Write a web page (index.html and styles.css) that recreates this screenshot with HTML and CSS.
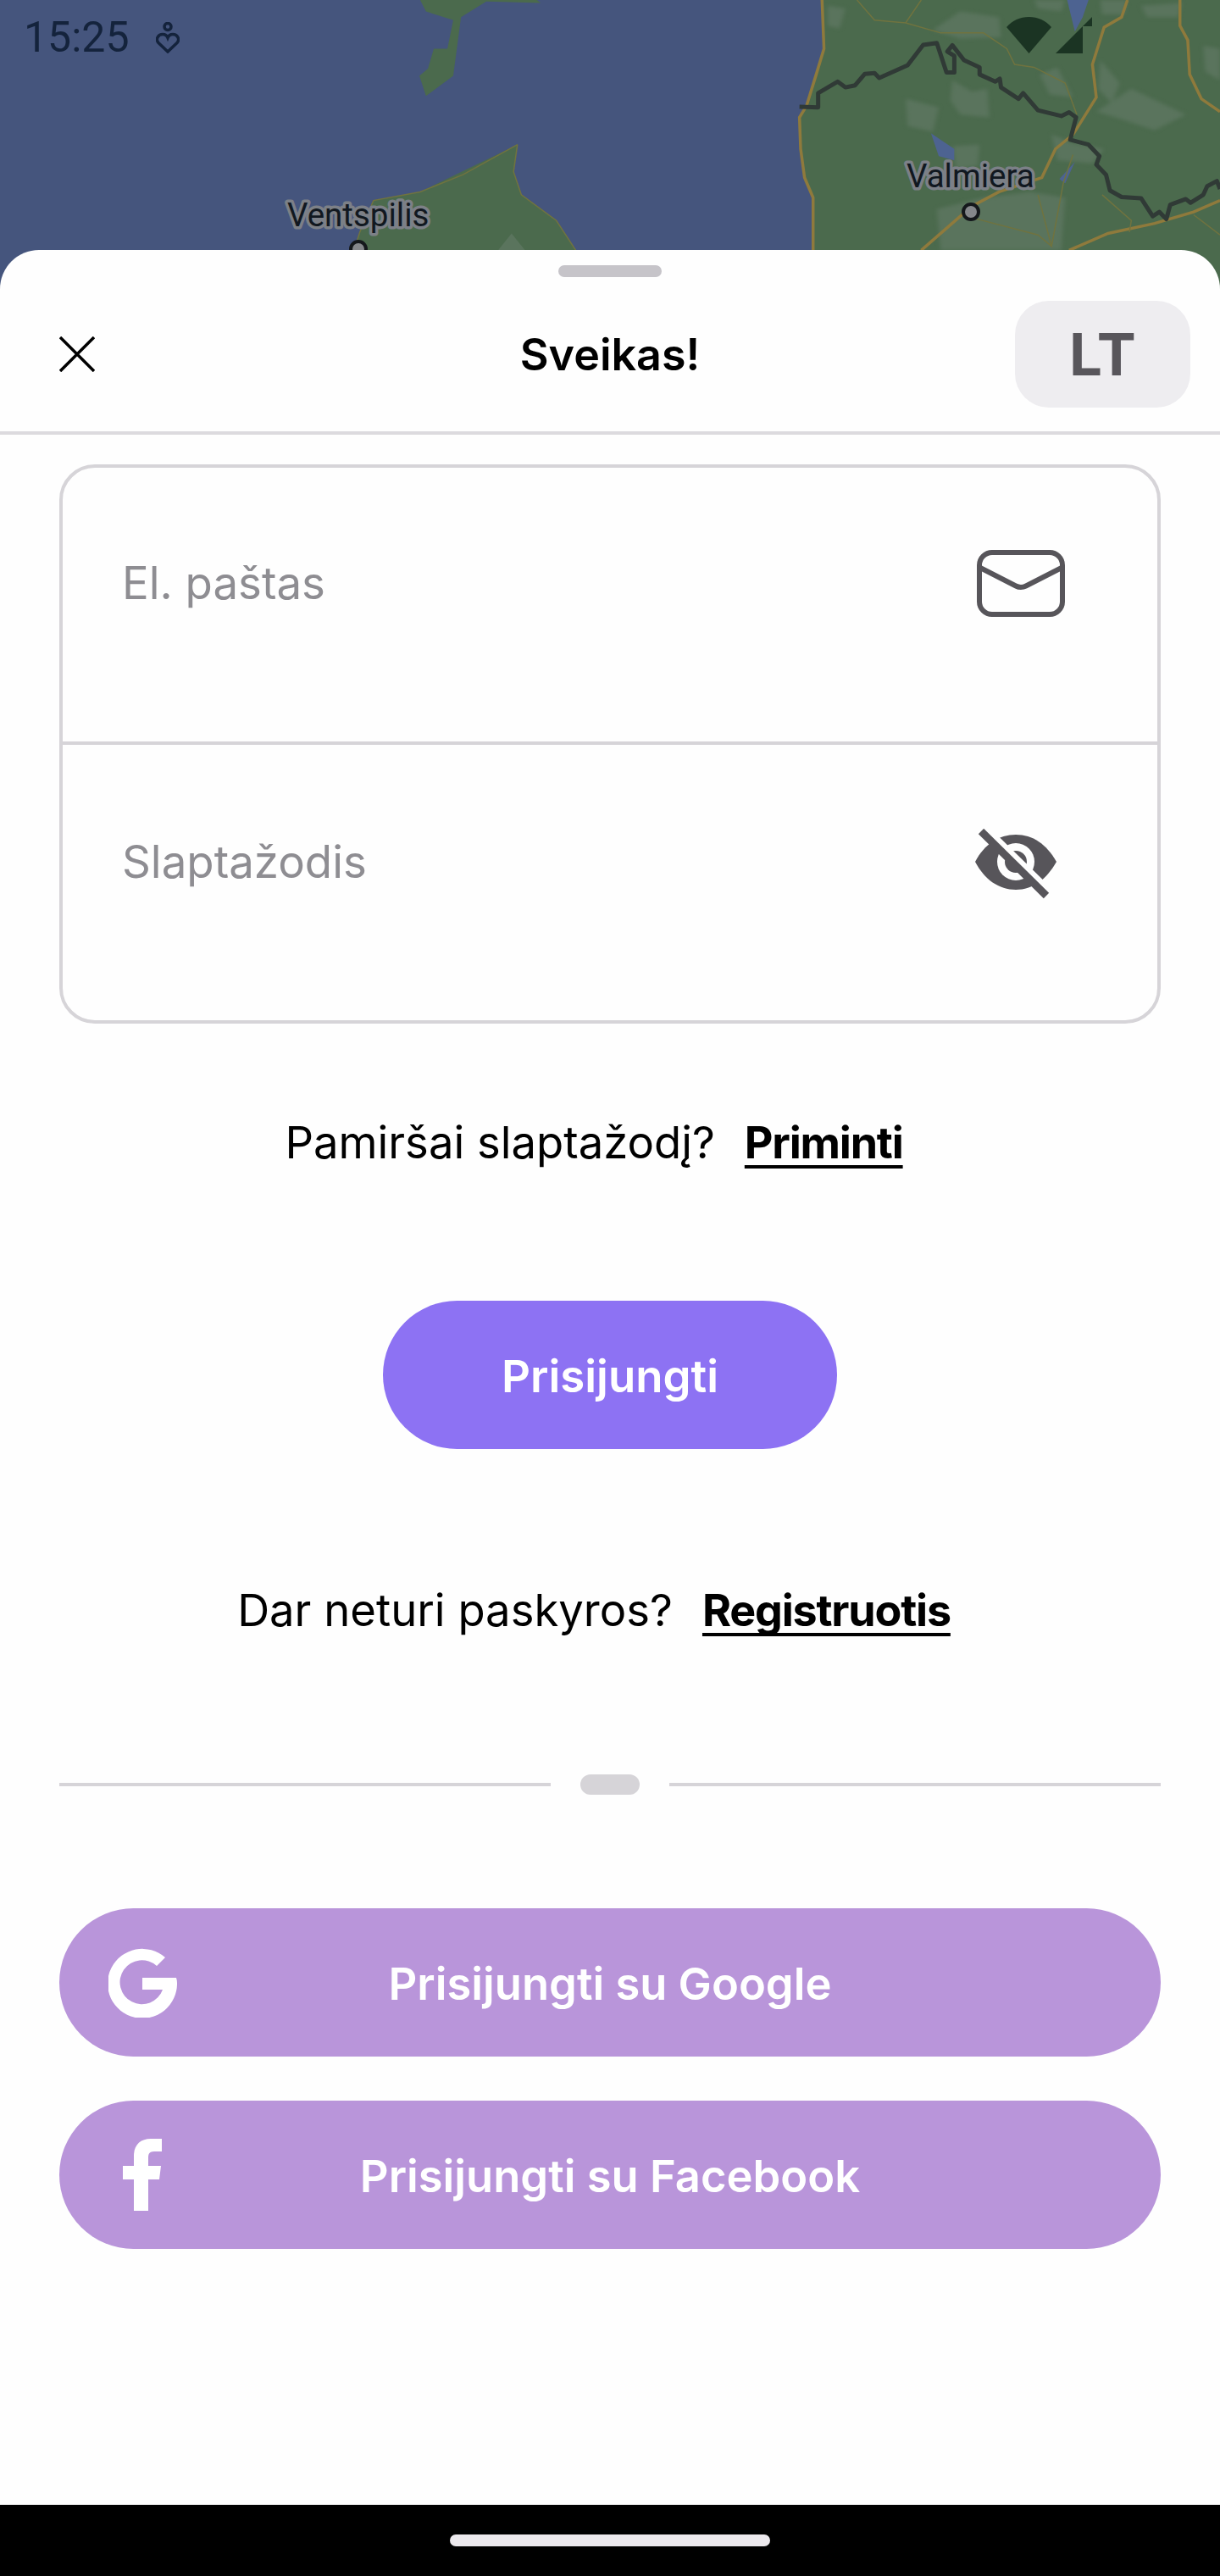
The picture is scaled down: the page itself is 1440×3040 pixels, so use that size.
FILE: index.html
```html
<!DOCTYPE html>
<html lang="lt">
<head>
<meta charset="utf-8">
<title>Sveikas!</title>
<link rel="stylesheet" href="styles.css">
</head>
<body>
<div class="screen">
  <div class="map">
    <svg class="map-svg" width="1440" height="345" viewBox="0 0 1440 345">
      <rect width="1440" height="345" fill="#45557d"/>
      <g transform="scale(.4592 .338)">
        <path class="land" d="M1080 0 1095 40 1165 70 1150 170 1115 170 1100 240 1078 265 1095 335 1165 265 1185 60 1250 5 1390 10 1380 0Z"/>
        <path class="land" d="M1330 505 1320 600 1340 680 1430 770 1480 874 1480 1020 880 1020 910 874 925 810 960 700 1080 670Z"/>
        <path class="road-thin" d="M1330 505 1320 600 1340 680 1430 770 1480 874"/>
        <path class="road-thin" d="M1330 505 1190 610 1080 670 960 700 925 810 910 874"/>
        <path class="urban" d="M1280 874 1315 815 1350 874Z"/>
      </g>
      <g transform="translate(720 0) scale(.4592 .338)">
        <path class="land" d="M545 0 550 170 530 260 505 370 487 410 490 520 500 620 522 690 522 1020 1568 1020 1568 0Z"/>
        <g class="urban-group">
          <path class="urban" d="M560 20 605 30 590 100 560 90Z"/>
          <path class="urban" d="M830 105 900 40 1000 60 1005 130 900 135Z"/>
          <path class="urban" d="M760 345 845 375 830 460 765 440Z"/>
          <path class="urban" d="M880 280 930 320 970 310 975 410 900 400 875 350Z"/>
          <path class="urban" d="M1105 260 1150 235 1190 340 1130 330Z"/>
          <path class="urban" d="M1250 390 1340 310 1480 400 1400 455 1300 410Z"/>
          <path class="urban" d="M1260 210 1310 290 1290 360 1255 310Z"/>
          <path class="urban" d="M1090 0 1170 0 1160 40 1100 30Z"/>
          <path class="urban" d="M1260 0 1330 0 1320 50 1265 50Z"/>
          <path class="urban" d="M1365 20 1470 10 1460 60 1380 60Z"/>
          <path class="urban" d="M1525 160 1568 170 1568 280 1530 250Z"/>
          <path class="urban" d="M880 510 950 505 945 580 890 590Z"/>
          <path class="urban" d="M840 730 960 690 1080 670 1170 690 1160 874 850 874Z"/>
          <path class="urban" d="M1135 470 1190 500 1270 520 1240 570 1150 560Z"/>
        </g>
        <path class="lake" d="M825 465 885 520 885 560 845 545Z"/>
        <path class="lake" d="M1175 0 1230 0 1215 60 1195 110Z"/>
        <path class="lake" d="M1155 625 1195 565 1170 640Z"/>
        <path class="road" d="M545 0 550 170 530 260 505 370 487 410 490 520 500 620 522 690 522 874"/>
        <path class="road" d="M1330 0 1315 60 1270 95 1240 225 1250 340 1190 470 1145 520 1110 620 1000 670 930 720 800 874"/>
        <path class="road" d="M1465 0 1465 90 1485 140 1490 260 1520 345 1568 390"/>
        <path class="road" d="M1180 874 1280 815 1400 780 1500 740 1568 700"/>
        <path class="road-thin" d="M635 0 680 70 760 80 800 0"/>
        <path class="road-thin" d="M760 80 850 115 960 115 1020 170 1040 225 1090 235 1170 290 1200 400"/>
        <path class="road-thin" d="M930 760 1100 820 1135 860 1100 680"/>
        <path class="road-thin" d="M1135 860 1165 640 1190 540"/>
        <path class="road-thin" d="M1265 680 1340 770 1335 810"/>
        <path class="road-thin" d="M1500 750 1568 820"/>
        <path class="border" d="M487 373 535 375 535 325 585 285 605 305 630 298 655 258 680 255 692 272 765 228 805 157 840 150 865 253 885 253 885 195 867 180 880 158 910 210 950 235 950 260 990 285 1002 275 1005 305 1050 345 1062 325 1100 385 1160 405 1180 392 1198 410 1183 488 1230 505 1258 545 1250 575 1275 610 1285 665 1315 688 1365 692 1395 755 1412 740 1430 765 1440 715 1480 695 1492 708 1525 680 1535 650 1560 632 1568 660"/>
      </g>
      <text class="city" x="339" y="267">Ventspilis</text>
      <text class="city" x="1070" y="221">Valmiera</text>
      <circle class="dot" cx="423" cy="294" r="9"/>
      <circle class="dot" cx="1146" cy="250" r="9"/>
    </svg>
    <div class="status-left">
      <span class="clock">15:25</span>
      <svg class="status-person" width="28" height="37" viewBox="0 0 28 37">
        <circle cx="14" cy="5.500" r="4"/>
        <path d="M14 35 3 24.500C-1 20 3 14.500 8 14.500 11 14.500 13 16 14 18.500 15 16 17 14.500 20 14.500 25 14.500 29 20 25 24.500Z"/>
      </svg>
    </div>
    <svg class="status-wifi" width="53" height="43" viewBox="0 0 53 43">
      <path d="M0 12C7 4 16 0 26.500 0S46 4 53 12L26.500 43Z"/>
    </svg>
    <svg class="status-signal" width="43" height="43" viewBox="0 0 43 43">
      <path d="M43 0V11H32V43H0Z"/>
    </svg>
  </div>

  <div class="sheet">
    <div class="handle"></div>
    <header class="topbar">
      <button class="close" type="button" aria-label="Uždaryti">
        <svg width="42" height="42" viewBox="0 0 42 42"><path d="M1 1 41 41M41 1 1 41"/></svg>
      </button>
      <h1 class="title">Sveikas!</h1>
      <button class="lang" type="button">LT</button>
    </header>

    <main class="content">
      <div class="form-box">
        <div class="field">
          <span class="placeholder">El. paštas</span>
          <svg class="mail" width="104" height="79" viewBox="0 0 104 79">
            <rect x="3" y="3" width="98" height="73" rx="15"/>
            <path d="M4 21 46 42.500Q52 45.500 58 42.500L100 21"/>
          </svg>
        </div>
        <div class="field">
          <span class="placeholder">Slaptažodis</span>
          <svg class="eye" width="97" height="83" viewBox="0 0 97 83">
            <path class="eye-body" d="M1 39C12 18 29 7 49 7S85 18 97 39C85 60 69 72 49 72S12 60 1 39Z"/>
            <circle class="eye-ring" cx="49" cy="39" r="22"/>
            <circle class="eye-body" cx="49" cy="39" r="13"/>
            <path class="eye-gap" d="M18 5.500 100 86"/>
            <path class="eye-slash" d="M8 3 85 79"/>
          </svg>
        </div>
      </div>

      <p class="prompt prompt-forgot"><span class="prompt-text">Pamiršai slaptažodį?</span><a class="prompt-link" href="#">Priminti</a></p>
      <button class="primary" type="button">Prisijungti</button>
      <p class="prompt prompt-register"><span class="prompt-text">Dar neturi paskyros?</span><a class="prompt-link" href="#">Registruotis</a></p>

      <div class="divider">
        <span class="divider-line"></span>
        <span class="divider-pill"></span>
        <span class="divider-line"></span>
      </div>

      <div class="social">
        <button class="social-btn" type="button">
          <svg class="icon-g" width="81" height="82" viewBox="0 0 81 82">
            <path d="M67 11A41 41 0 1 0 81 41Q81 38 80 35H40V49H64A26 26 0 1 1 57 21Z"/>
          </svg>
          Prisijungti su Google
        </button>
        <button class="social-btn" type="button">
          <svg class="icon-f" width="46" height="85" viewBox="0 0 46 85">
            <path d="M13 85V48H0V32H13V20C13 7 21 0 33 0H46V15H37C32 15 30 17 30 22V32H45L43 48H30V85Z"/>
          </svg>
          Prisijungti su Facebook
        </button>
      </div>
    </main>

    <footer class="navbar"><span class="home-pill"></span></footer>
  </div>
</div>
</body>
</html>
```

FILE: styles.css
```css
* { box-sizing: border-box; }
html, body { margin: 0; padding: 0; background: #000; }
body { font-family: Inter, "Noto Sans", sans-serif; color: #000; }

.screen {
  position: relative;
  width: 1440px;
  height: 3040px;
  display: flex;
  flex-direction: column;
  overflow: hidden;
  padding-top: 295px;
}

/* map behind the sheet */
.map { position: absolute; top: 0; left: 0; width: 1440px; height: 345px; }
.map-svg { display: block; }
.land { fill: #4b6a4d; }
.urban { fill: #5a745d; }
.urban-group { filter: blur(6px); }
.lake { fill: #4d6391; }
.road { fill: none; stroke: #8f7a3c; stroke-width: 3.500px; vector-effect: non-scaling-stroke; }
.road-thin { fill: none; stroke: #70733f; stroke-width: 1.500px; vector-effect: non-scaling-stroke; }
.border { fill: none; stroke: #303a36; stroke-width: 5px; stroke-linejoin: round; vector-effect: non-scaling-stroke; }
.city {
  font-family: Roboto, sans-serif;
  font-size: 38.500px;
  fill: #111820;
  stroke: #7c8087;
  stroke-width: 7px;
  stroke-linejoin: round;
  paint-order: stroke;
}
.dot { fill: #85878b; stroke: #15181c; stroke-width: 4px; }

.status-left {
  position: absolute;
  top: 18px;
  left: 28px;
  display: flex;
  align-items: center;
  gap: 31px;
}
.clock { font-family: Roboto, sans-serif; font-size: 50px; line-height: 52px; font-weight: 400; color: #14233c; }
.status-person circle, .status-person path { fill: none; stroke: #14233c; stroke-width: 3.500px; }
.status-wifi { position: absolute; top: 20px; left: 1188px; fill: #1b3423; }
.status-signal { position: absolute; top: 20px; left: 1246px; fill: #1b3423; }

/* sheet */
.sheet {
  position: relative;
  flex: 1;
  display: flex;
  flex-direction: column;
  background: #fefefe;
  border-radius: 46px 46px 0 0;
}
.handle {
  flex: none;
  width: 122px;
  height: 14px;
  margin: 18px auto 0;
  border-radius: 7px;
  background: #c6c4c9;
}
.topbar {
  flex: none;
  display: grid;
  grid-template-columns: 1fr auto 1fr;
  align-items: center;
  height: 186px;
  padding: 28px 35px 28px;
  border-bottom: 4px solid #dcdade;
}
.close {
  justify-self: start;
  margin: 0 0 0 35px;
  padding: 0;
  width: 42px;
  height: 42px;
  border: 0;
  background: none;
  display: block;
}
.close svg { display: block; fill: none; stroke: #000; stroke-width: 3.500px; }
.title {
  margin: 0;
  padding-top: 2px;
  font-size: 52px;
  line-height: 62px;
  font-weight: 600;
  color: #000;
}
.lang {
  justify-self: end;
  width: 207px;
  height: 126px;
  border: 0;
  border-radius: 40px;
  background: #eeedf0;
  color: #58565b;
  font-family: Inter, sans-serif;
  font-size: 69px;
  font-weight: 700;
  padding: 0;
}

.content {
  flex: 1;
  display: flex;
  flex-direction: column;
  align-items: center;
  padding: 35px 70px 0;
}
.form-box {
  width: 1300px;
  height: 660px;
  border: 4px solid #d6d4d8;
  border-radius: 42px;
  display: flex;
  flex-direction: column;
}
.field {
  flex: 1;
  position: relative;
  display: flex;
  align-items: flex-start;
  justify-content: space-between;
  padding: 99px 109px 0 70px;
}
.field + .field { border-top: 4px solid #d6d4d8; padding-top: 101px; }
.placeholder {
  font-size: 52.800px;
  line-height: 74px;
  color: #8e8d92;
}
.mail { margin-top: -2px; }
.mail rect, .mail path { fill: none; stroke: #57555a; stroke-width: 6px; }
.eye { margin: -2px 10px 0 0; }
.eye-body { fill: #57555a; }
.eye-ring { fill: #fefefe; }
.eye-gap { stroke: #fefefe; stroke-width: 10px; fill: none; }
.eye-slash { stroke: #57555a; stroke-width: 9px; fill: none; }

.prompt {
  margin: 0;
  padding-top: 3px;
  font-size: 52.600px;
  line-height: 62px;
  color: #000;
  text-align: center;
}
.prompt-forgot { margin-top: 106px; }
.prompt-register { margin-top: 156px; }
.prompt-link {
  margin: 0 38px 0 35px;
  color: #000;
  font-size: 52px;
  font-weight: 700;
  letter-spacing: -1.200px;
  text-decoration: underline;
  text-decoration-thickness: 4px;
  text-decoration-skip-ink: none;
  text-underline-offset: 8px;
}

.primary {
  margin-top: 155px;
  width: 536px;
  height: 175px;
  border: 0;
  border-radius: 88px;
  background: #8d72f3;
  color: #fff;
  font-family: Inter, sans-serif;
  font-size: 52.800px;
  font-weight: 600;
  padding: 3px 0 0;
}

.divider {
  margin-top: 162px;
  width: 1300px;
  height: 24px;
  display: flex;
  align-items: center;
  justify-content: space-between;
}
.divider-line { width: 580px; height: 4px; background: #d6d4d8; }
.divider-pill { width: 70px; height: 24px; border-radius: 12px; background: #d6d4d8; }

.social {
  margin-top: 134px;
  width: 1300px;
  display: flex;
  flex-direction: column;
  gap: 52px;
}
.social-btn {
  position: relative;
  height: 175px;
  border: 0;
  border-radius: 88px;
  background: #b995da;
  color: #fff;
  font-family: Inter, sans-serif;
  font-size: 52.500px;
  font-weight: 600;
  padding: 3px 0 0;
}
.icon-g { position: absolute; left: 58px; top: 47px; fill: #fff; }
.icon-f { position: absolute; left: 75px; top: 45px; fill: #fff; }

.navbar {
  flex: none;
  height: 84px;
  background: #000;
  display: flex;
  justify-content: center;
  padding-top: 35px;
}
.home-pill { width: 378px; height: 14px; border-radius: 7px; background: #ece9ed; }
```
